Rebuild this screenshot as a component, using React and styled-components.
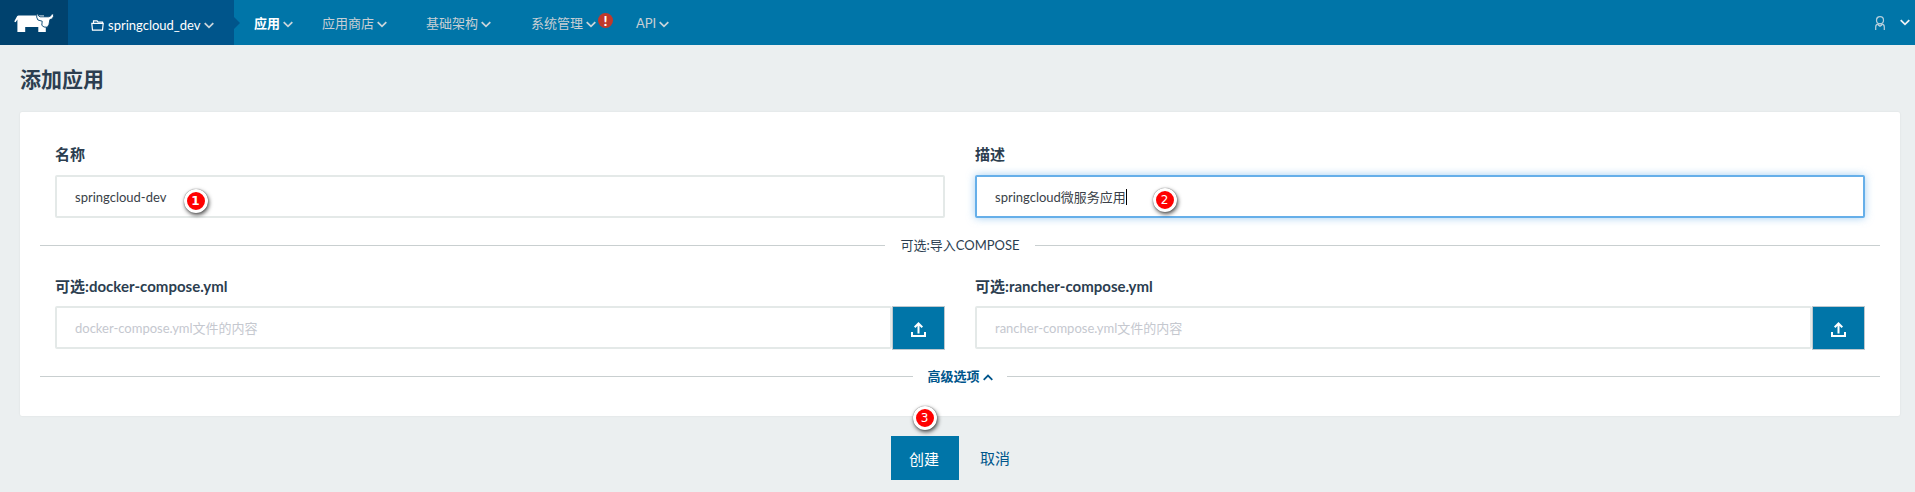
import React from "react";
import styled, { createGlobalStyle } from "styled-components";

const Global = createGlobalStyle`
  *, *::before, *::after { box-sizing: border-box; }
  body {
    margin: 0;
    background: #ebeff0;
    color: #2c3e50;
    font-family: Lato, "Noto Sans CJK SC", sans-serif;
    font-size: 13px;
    line-height: 20px;
  }
`;

const Page = styled.div`
  min-height: 492px;
  overflow: hidden;
`;

const Header = styled.header`
  display: flex;
  height: 45px;
  background: #0075a8;
`;

const LogoBox = styled.a`
  width: 68px;
  padding: 14px 0 0 14px;
  background: #00426e;
`;

const Project = styled.div`
  position: relative;
  display: flex;
  align-items: center;
  width: 166px;
  padding: 6px 0 0 23px;
  background: #00558b;
  color: #fff;
  &::after {
    content: "";
    position: absolute;
    left: 100%;
    top: 17px;
    border: 6px solid transparent;
    border-left-color: #00558b;
    border-right-width: 0;
  }
`;

const ProjectName = styled.span`
  margin: -2px 3px 0 4px;
`;

const Nav = styled.nav`
  display: flex;
  flex: 1;
  align-items: center;
  padding-left: 20px;
`;

const NavItem = styled.a`
  position: relative;
  display: flex;
  align-items: center;
  width: ${(p) => p.$width}px;
  height: 45px;
  gap: 3px;
  color: ${(p) => (p.$active ? "#fff" : "#c8cfd4")};
  font-weight: ${(p) => (p.$active ? 700 : 400)};
  svg { position: relative; top: 2px; }
`;

const Alert = styled.span`
  position: absolute;
  left: 67px;
  top: 13px;
  width: 15px;
  height: 15px;
  border-radius: 50%;
  background: #c0392b;
  color: #fff;
  font-size: 14px;
  font-weight: 900;
  line-height: 15px;
  text-align: center;
`;

const UserMenu = styled.div`
  display: flex;
  align-items: center;
  gap: 15px;
  padding-right: 5px;
`;

const Title = styled.h1`
  margin: 0;
  padding: 19px 20px 18px;
  font-size: 21px;
  font-weight: 700;
  line-height: 30px;
`;

const Card = styled.section`
  height: 304px;
  margin: 0 15px 0 20px;
  padding: 29px 20px 0;
  border-radius: 2px;
  background: #fff;
  box-shadow: 0 0 2px rgba(0, 0, 0, 0.08);
`;

const Row = styled.div`
  display: grid;
  grid-template-columns: 1fr 1fr;
  gap: 30px;
  padding: 0 15px;
`;

const Field = styled.div`
  position: relative;
`;

const Label = styled.label`
  display: block;
  height: 34px;
  font-size: 15px;
  font-weight: 700;
  line-height: ${(p) => (p.$low ? 29 : 27)}px;
  letter-spacing: ${(p) => (p.$low ? 0.02 : 0)}px;
`;

const InputBox = styled.div`
  flex: 1;
  display: flex;
  align-items: center;
  height: 43px;
  padding: 0 18px 0;
  border: 2px solid ${(p) => (p.$focus ? "#66afe9" : "#e4e9e8")};
  border-radius: 2px;
  background: #fff;
  box-shadow: ${(p) => (p.$focus ? "0 0 8px rgba(102, 175, 233, 0.6)" : "none")};
  color: ${(p) => (p.$placeholder ? "#c5c8cf" : "#3a3f48")};
`;

const Caret = styled.i`
  width: 1px;
  height: 16px;
  background: #000;
`;

const InputGroup = styled.div`
  display: flex;
  height: 44px;
`;

const UploadButton = styled.button`
  display: flex;
  align-items: center;
  justify-content: center;
  width: 53px;
  height: 44px;
  padding: 3px 0 0;
  border: 1px solid #bec8ce;
  background: #0075a8;
`;

const Divider = styled.div`
  display: flex;
  align-items: center;
  justify-content: center;
  height: 20px;
  margin: ${(p) => p.$margin};
  &::before, &::after {
    content: "";
    flex: 1;
    height: 1px;
    background: #c9cfd0;
  }
`;

const DividerText = styled.span`
  display: flex;
  align-items: center;
  justify-content: center;
  gap: 3px;
  width: ${(p) => p.$width}px;
  color: ${(p) => (p.$link ? "#00558b" : "#2c3e50")};
  font-weight: ${(p) => (p.$link ? 700 : 400)};
  svg { position: relative; top: 1px; }
`;

const Marker = styled.span`
  position: absolute;
  left: ${(p) => p.$x}px;
  top: ${(p) => p.$y}px;
  width: 24px;
  height: 24px;
  border: 3px solid #fff;
  border-radius: 50%;
  background: #f00;
  box-shadow: 1px 2px 4px rgba(0, 0, 0, 0.7), 0 0 1px rgba(0, 0, 0, 0.6);
  color: #fff;
  font: ${(p) => (p.$bold ? 700 : 400)} 12px/18px "DejaVu Sans", sans-serif;
  text-align: center;
`;

const Footer = styled.footer`
  display: flex;
  padding: 20px 0 0 891px;
`;

const CreateWrap = styled.div`
  position: relative;
`;

const CreateButton = styled.button`
  width: 68px;
  height: 44px;
  padding: 1px 2px 0 0;
  border: 0;
  background: #0075a8;
  color: #fff;
  font: inherit;
  font-size: 15px;
`;

const Cancel = styled.a`
  padding-left: 21px;
  color: #00558b;
  font-size: 15px;
  line-height: 45px;
`;

const Chevron = ({ up, color = "#c8d4da" }) => (
  <svg width="10" height="7" viewBox="0 0 10 7" fill="none" stroke={color} strokeWidth="1.8">
    <path d={up ? "M.7 5.8 5 1.6l4.3 4.2" : "M.7 1.1 5 5.3l4.3-4.2"} />
  </svg>
);

const Logo = () => (
  <svg width="40" height="18" viewBox="0 0 40 18" fill="#fff">
    <path d="M4.5 1.6H30V13H31.8V18H24.3V13H11.2V18H3.4V5.6L1.6 8.3 .2 7.4 2.4 3.4Q3 1.6 4.5 1.6Z" />
    <path
      d="M24 -.3Q24.2 2.6 26 2.8H34.5Q37.3 2.6 37.7 -.3L39.6 .4Q39.9 4.8 35.9 5.6L35 10.4 33.4 13.2 30 13 27.8 11.3 28.2 7.2 23.9 6Q22 3.2 22.9 .2Z"
      stroke="#00426e"
      strokeWidth=".9"
    />
  </svg>
);

const Folder = () => (
  <svg width="13" height="11" viewBox="0 0 13 11" fill="none" stroke="#fff" strokeWidth="1.2">
    <path d="M2.5 3V.8H6L7 2H11.5V3M.8 3.3H12.2L11.5 10.2H1.5Z" />
  </svg>
);

const User = () => (
  <svg width="10" height="14" viewBox="0 0 10 14" fill="none" stroke="#b5cfdc" strokeWidth="1.2">
    <circle cx="5" cy="4.2" r="3.5" />
    <path d="M.7 14V11Q.7 8.5 3 8.2 5 10.5 7 8.2 9.3 8.5 9.3 11V14" />
    <path d="M3 9 5 10.3 7 9" />
  </svg>
);

const Upload = () => (
  <svg width="15" height="15" viewBox="0 0 15 15" fill="none" stroke="#fff" strokeWidth="2">
    <path d="M1 10V14H14V10M7.5 11.5V2M3.7 5.3 7.5 1.5 11.3 5.3" />
  </svg>
);

const items = [
  { text: "应用", width: 68, active: true },
  { text: "应用商店", width: 104 },
  { text: "基础架构", width: 105 },
  { text: "系统管理", width: 105, alert: true },
  { text: "API", width: 60 },
];

export default function App() {
  return (
    <Page>
      <Global />
      <Header>
        <LogoBox><Logo /></LogoBox>
        <Project>
          <Folder />
          <ProjectName>springcloud_dev</ProjectName>
          <Chevron />
        </Project>
        <Nav>
          {items.map((i) => (
            <NavItem key={i.text} $width={i.width} $active={i.active}>
              {i.text}
              <Chevron />
              {i.alert && <Alert>!</Alert>}
            </NavItem>
          ))}
        </Nav>
        <UserMenu>
          <User />
          <Chevron color="#eef2f4" />
        </UserMenu>
      </Header>
      <Title>添加应用</Title>
      <Card>
        <Row>
          <Field>
            <Label>名称</Label>
            <InputBox>springcloud-dev</InputBox>
            <Marker $x={128.5} $y={47.5} $bold>1</Marker>
          </Field>
          <Field>
            <Label>描述</Label>
            <InputBox $focus>springcloud微服务应用<Caret /></InputBox>
            <Marker $x={177.5} $y={47}>2</Marker>
          </Field>
        </Row>
        <Divider $margin="17px 0 17px">
          <DividerText $width={150}>可选:导入COMPOSE</DividerText>
        </Divider>
        <Row>
          <Field>
            <Label $low>可选:docker-compose.yml</Label>
            <InputGroup>
              <InputBox $placeholder>docker-compose.yml文件的内容</InputBox>
              <UploadButton><Upload /></UploadButton>
            </InputGroup>
          </Field>
          <Field>
            <Label $low>可选:rancher-compose.yml</Label>
            <InputGroup>
              <InputBox $placeholder>rancher-compose.yml文件的内容</InputBox>
              <UploadButton><Upload /></UploadButton>
            </InputGroup>
          </Field>
        </Row>
        <Divider $margin="16px 0 0">
          <DividerText $width={94} $link>高级选项<Chevron up color="#00558b" /></DividerText>
        </Divider>
      </Card>
      <Footer>
        <CreateWrap>
          <CreateButton>创建</CreateButton>
          <Marker $x={21.5} $y={-30.5}>3</Marker>
        </CreateWrap>
        <Cancel>取消</Cancel>
      </Footer>
    </Page>
  );
}
